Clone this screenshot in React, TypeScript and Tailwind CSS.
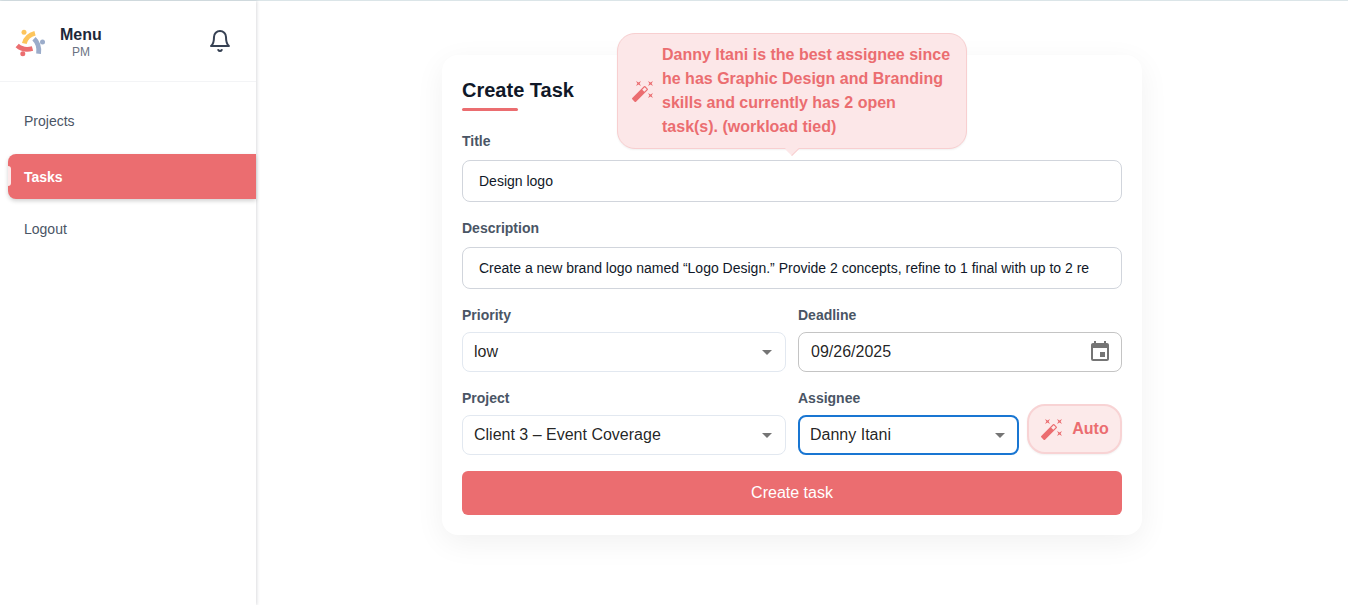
import type { ReactNode } from "react";
import { MdArrowDropDown, MdAutoFixHigh, MdEvent } from "react-icons/md";

function Logo() {
  return (
    <svg viewBox="0 0 32 32" className="size-8" fill="none" aria-hidden="true">
      <circle cx="10" cy="7.300" r="2.500" fill="#fdc55c" />
      <path d="M10.300 18.500C11.500 14 14.500 10 21 8.300" stroke="#fdc55c" strokeWidth="4.800" />
      <circle cx="28.500" cy="17" r="2.500" fill="#9bacca" />
      <path d="M20 13.800C24 17.500 25.500 22 24.600 28.700" stroke="#9bacca" strokeWidth="4.800" />
      <circle cx="8.800" cy="28.800" r="2.500" fill="#eb6e70" />
      <path d="M3.200 20.500C7 24 12 25.300 18.500 23.500" stroke="#eb6e70" strokeWidth="4.800" />
    </svg>
  );
}

function Bell() {
  return (
    <svg viewBox="0 0 24 24" className="size-6" fill="none" stroke="currentColor" strokeWidth="2" strokeLinecap="round" strokeLinejoin="round" aria-hidden="true">
      <path d="M6 8a6 6 0 0 1 12 0c0 7 3 9 3 9H3s3-2 3-9" />
      <path d="M10.3 21a1.94 1.94 0 0 0 3.4 0" />
    </svg>
  );
}

function Label({ id, children }: { id: string; children: ReactNode }) {
  return (
    <label htmlFor={id} className="block text-sm leading-5 font-bold text-gray-600">
      {children}
    </label>
  );
}

function Select({ id, value, focused = false }: { id: string; value: string; focused?: boolean }) {
  return (
    <div className="relative">
      <select
        id={id}
        defaultValue={value}
        className={
          focused
            ? "h-10 w-full appearance-none rounded-lg border-2 border-[#1976d2] bg-white pr-8 pl-2.5 text-base text-black/87 outline-none"
            : "h-10 w-full appearance-none rounded-lg border border-slate-200 bg-white pr-8 pl-[11px] text-base text-black/87 outline-none"
        }
      >
        <option>{value}</option>
      </select>
      <MdArrowDropDown className="pointer-events-none absolute top-2 right-[7px] size-6 text-black/54" />
    </div>
  );
}

export default function App() {
  return (
    <div className="flex min-h-screen border-t border-[#dbe5e8] bg-white font-['Liberation_Sans',Arial,sans-serif]">
      <aside className="w-64 shrink-0 bg-white shadow-[1px_0_3px_rgba(15,23,42,0.15)]">
        <div className="flex h-[81px] items-center border-b border-gray-100 pr-6 pl-3.5">
          <Logo />
          <div className="ml-3.5 pt-1 text-center">
            <p className="text-base leading-[18px] font-bold text-gray-800">Menu</p>
            <p className="text-xs leading-4 text-gray-500">PM</p>
          </div>
          <button type="button" aria-label="Notifications" className="ml-auto text-gray-700">
            <Bell />
          </button>
        </div>
        <nav className="flex flex-col gap-2 pt-[17px] pl-2 text-sm leading-5">
          <a href="#projects" className="px-4 py-3 text-gray-600">Projects</a>
          <a href="#tasks" className="relative mt-[3px] flex h-[45px] items-center rounded-l-lg bg-[#eb6d70] px-4 font-bold text-white shadow-[0_2px_4px_rgba(0,0,0,0.18)]">
            <span className="absolute top-3 left-0 h-5 w-[3px] rounded-r-sm bg-white/85" />
            Tasks
          </a>
          <a href="#logout" className="px-4 py-3 text-gray-600">Logout</a>
        </nav>
      </aside>

      <main className="flex flex-1 items-start justify-center pt-[54px] pr-5">
        <form className="relative w-full max-w-[700px] rounded-2xl bg-white p-5 shadow-[0_8px_30px_rgba(0,0,0,0.06)]">
          <h1 className="pt-[3px] text-xl leading-6 font-bold text-gray-900">Create Task</h1>
          <div className="mt-1.5 h-[3px] w-14 rounded-full bg-[#eb6d70]" />

          <div className="mt-5 flex flex-col gap-[9px]">
            <Label id="title">Title</Label>
            <input
              id="title"
              defaultValue="Design logo"
              className="h-[42px] w-full rounded-lg border border-gray-300 px-4 text-sm text-gray-900 outline-none"
            />
          </div>
          <div className="mt-4 flex flex-col gap-[9px]">
            <Label id="description">Description</Label>
            <input
              id="description"
              defaultValue="Create a new brand logo named “Logo Design.” Provide 2 concepts, refine to 1 final with up to 2 re"
              className="h-[42px] w-full rounded-lg border border-gray-300 px-4 text-sm text-gray-900 outline-none"
            />
          </div>

          <div className="mt-4 grid grid-cols-2 gap-x-3 gap-y-4">
            <div className="flex flex-col gap-[7px]">
              <Label id="priority">Priority</Label>
              <Select id="priority" value="low" />
            </div>
            <div className="flex flex-col gap-[7px]">
              <Label id="deadline">Deadline</Label>
              <div className="relative">
                <input
                  id="deadline"
                  defaultValue="09/26/2025"
                  className="h-10 w-full rounded-lg border border-black/23 pr-10 pl-3 text-base text-black/87 outline-none"
                />
                <button type="button" aria-label="Choose date" className="absolute top-2 right-2.5 text-black/54">
                  <MdEvent className="size-6" />
                </button>
              </div>
            </div>
            <div className="flex flex-col gap-[7px]">
              <Label id="project">Project</Label>
              <Select id="project" value="Client 3 – Event Coverage" />
            </div>
            <div className="flex items-end gap-2">
              <div className="flex flex-1 flex-col gap-[7px]">
                <Label id="assignee">Assignee</Label>
                <Select id="assignee" value="Danny Itani" focused />
              </div>
              <button
                type="button"
                className="mb-px flex h-[50px] w-[95px] items-center justify-center gap-2 rounded-[18px] border-2 border-[#f8d3d4] bg-[#fceaea] text-base font-bold text-[#eb6d70] shadow-[0_1px_2px_rgba(0,0,0,0.06)]"
              >
                <MdAutoFixHigh className="size-6" />
                Auto
              </button>
            </div>
          </div>

          <button type="submit" className="mt-4 h-11 w-full rounded-md bg-[#eb6d70] text-base text-white">
            Create task
          </button>

          <div
            role="tooltip"
            className="absolute -top-[22px] left-1/2 flex w-[350px] -translate-x-1/2 items-center gap-[7px] rounded-[18px] border border-[#f8cfd0] bg-[#fce7e8] px-[13px] py-[9px] text-base leading-6 font-bold text-[#eb6d70] shadow-[0_1px_2px_rgba(0,0,0,0.06)]"
          >
            <MdAutoFixHigh className="size-6 shrink-0" />
            <p>
              Danny Itani is the best assignee since he has Graphic Design and Branding skills and currently has 2 open task(s). (workload tied)
            </p>
            <span className="absolute -bottom-1.5 left-1/2 size-2.5 -translate-x-1/2 rotate-45 border-r border-[#f8cfd0] bg-[#fce7e8]" />
          </div>
        </form>
      </main>
    </div>
  );
}
